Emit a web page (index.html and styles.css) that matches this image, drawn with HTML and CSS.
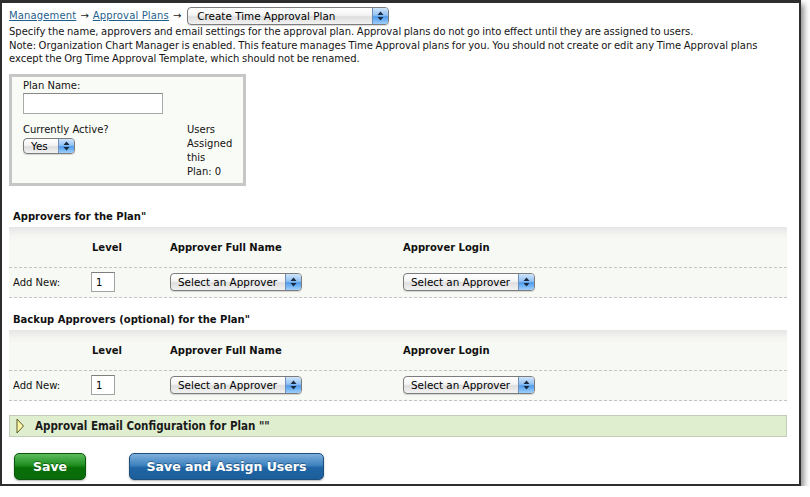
FILE: index.html
```html
<!DOCTYPE html>
<html>
<head>
<meta charset="utf-8">
<link rel="stylesheet" href="styles.css">
</head>
<body>
<div class="window">
  <div class="page">
    <div class="crumbs">
      <a href="#" class="link">Management</a>
      <span class="arr">→</span>
      <a href="#" class="link">Approval Plans</a>
      <span class="arr last">→</span>
      <div class="select sel-plan"><span class="sel-text">Create Time Approval Plan</span><span class="sel-btn"><svg width="7" height="10" viewBox="0 0 7 10"><path d="M3.5 0.5 L6.5 4 H0.5 Z M3.5 9.5 L6.5 6 H0.5 Z" fill="#1a2a40"/></svg></span></div>
    </div>
    <p class="desc">Specify the name, approvers and email settings for the approval plan. Approval plans do not go into effect until they are assigned to users.<br>Note: Organization Chart Manager is enabled. This feature manages Time Approval plans for you. You should not create or edit any Time Approval plans<br>except the Org Time Approval Template, which should not be renamed.</p>

    <div class="planbox">
      <div class="pb-name">
        <div class="lbl">Plan Name:</div>
        <input class="txt-input" type="text">
      </div>
      <div class="pb-active">
        <div class="lbl">Currently Active?</div>
        <div class="select sel-yes"><span class="sel-text">Yes</span><span class="sel-btn"><svg width="7" height="10" viewBox="0 0 7 10"><path d="M3.5 0.5 L6.5 4 H0.5 Z M3.5 9.5 L6.5 6 H0.5 Z" fill="#1a2a40"/></svg></span></div>
      </div>
      <div class="pb-users">Users<br>Assigned<br>this<br>Plan: 0</div>
    </div>

    <section class="block first">
      <h3 class="block-title">Approvers for the Plan"</h3>
      <div class="tbl">
        <div class="row head"><span></span><span>Level</span><span>Approver Full Name</span><span>Approver Login</span></div>
        <div class="row body">
          <span>Add New:</span>
          <span><input class="lvl-input" type="text" value="1"></span>
          <span><div class="select sel-appr"><span class="sel-text">Select an Approver</span><span class="sel-btn"><svg width="7" height="10" viewBox="0 0 7 10"><path d="M3.5 0.5 L6.5 4 H0.5 Z M3.5 9.5 L6.5 6 H0.5 Z" fill="#1a2a40"/></svg></span></div></span>
          <span><div class="select sel-appr"><span class="sel-text">Select an Approver</span><span class="sel-btn"><svg width="7" height="10" viewBox="0 0 7 10"><path d="M3.5 0.5 L6.5 4 H0.5 Z M3.5 9.5 L6.5 6 H0.5 Z" fill="#1a2a40"/></svg></span></div></span>
        </div>
      </div>
    </section>

    <section class="block second">
      <h3 class="block-title">Backup Approvers (optional) for the Plan"</h3>
      <div class="tbl">
        <div class="row head"><span></span><span>Level</span><span>Approver Full Name</span><span>Approver Login</span></div>
        <div class="row body">
          <span>Add New:</span>
          <span><input class="lvl-input" type="text" value="1"></span>
          <span><div class="select sel-appr"><span class="sel-text">Select an Approver</span><span class="sel-btn"><svg width="7" height="10" viewBox="0 0 7 10"><path d="M3.5 0.5 L6.5 4 H0.5 Z M3.5 9.5 L6.5 6 H0.5 Z" fill="#1a2a40"/></svg></span></div></span>
          <span><div class="select sel-appr"><span class="sel-text">Select an Approver</span><span class="sel-btn"><svg width="7" height="10" viewBox="0 0 7 10"><path d="M3.5 0.5 L6.5 4 H0.5 Z M3.5 9.5 L6.5 6 H0.5 Z" fill="#1a2a40"/></svg></span></div></span>
        </div>
      </div>
    </section>

    <div class="emailbar">
      <svg class="tri" width="9" height="16" viewBox="0 0 9 16"><path d="M1 1 L7.5 8 L1 15 Z" fill="#fbf6a8" stroke="#5a5a20" stroke-width="1"/></svg>
      <span class="email-text">Approval Email Configuration for Plan ""</span>
    </div>

    <div class="buttons">
      <button class="btn btn-green">Save</button>
      <button class="btn btn-blue">Save and Assign Users</button>
    </div>
  </div>
</div>
</body>
</html>
```

FILE: styles.css
```css
html, body {
  margin: 0;
  padding: 0;
  background: #ffffff;
}
body {
  font-family: "DejaVu Sans", Verdana, sans-serif;
  font-size: 10px;
  color: #111;
}
.window {
  width: 797px;
  height: 481px;
  border: 2px solid #2e2e2e;
  border-top: 3px solid #2e2e2e;
  background: #ffffff;
  box-shadow: 3px 4px 6px rgba(0, 0, 0, 0.45);
}
.page {
  padding: 0 11px 0 7px;
}
.crumbs {
  display: flex;
  align-items: center;
  height: 18px;
  padding-top: 4px;
  line-height: 14px;
}
.link {
  color: #1f5f8e;
  text-decoration: underline;
  letter-spacing: 0.15px;
}
.arr {
  margin: 0 4px 0 4px;
  color: #222;
}
.arr.last {
  margin-right: 6px;
}
.desc {
  margin: 0;
  line-height: 13.5px;
  color: #151515;
  word-spacing: -0.6px;
}

/* mac style select */
.select {
  display: flex;
  box-sizing: border-box;
  border: 1px solid #7c7c7c;
  border-radius: 4px;
  background: linear-gradient(#ffffff 0%, #f4f4f4 45%, #dedede 55%, #f2f2f2 100%);
  overflow: hidden;
  font-size: 10.4px;
  color: #000;
  box-shadow: 0 1px 1px rgba(0,0,0,0.15);
}
.sel-text {
  flex: 1;
  white-space: nowrap;
  overflow: hidden;
}
.sel-btn {
  width: 15px;
  display: flex;
  align-items: center;
  justify-content: center;
  border-left: 1px solid #6d8fb8;
  background: linear-gradient(#cfe4fb 0%, #93c2f3 45%, #4f9bec 55%, #9fd0fb 100%);
}
.sel-plan {
  width: 202px;
  height: 18px;
  line-height: 16px;
  margin-top: -1px;
}
.sel-plan .sel-text { padding-left: 9px; }
.sel-yes {
  width: 52px;
  height: 16px;
  line-height: 14px;
  margin-top: 1px;
}
.sel-yes .sel-text { padding-left: 7px; }
.sel-appr {
  width: 132px;
  height: 18px;
  line-height: 16px;
}
.sel-appr .sel-text { padding-left: 7px; }

/* plan box */
.planbox {
  box-sizing: border-box;
  width: 237px;
  margin-top: 8px;
  border: 3px solid #c6c6c6;
  background: #f9fbf6;
  padding: 2px 0 4px 11px;
  display: grid;
  grid-template-columns: 164px 1fr;
  grid-template-rows: auto auto;
  line-height: 14px;
}
.pb-name {
  grid-column: 1 / 3;
}
.txt-input {
  display: block;
  box-sizing: border-box;
  width: 140px;
  height: 21px;
  margin: 0;
  border: 1px solid #a9a9a9;
  border-top-color: #888;
  background: #fff;
}
.pb-active {
  padding-top: 9px;
}
.pb-users {
  padding-top: 9px;
}

/* approver blocks */
.block-title {
  margin: 0;
  font-size: 10px;
  font-weight: bold;
  line-height: 14px;
  padding-left: 4px;
}
.block.first { margin-top: 24px; }
.block.second { margin-top: 15px; }
.tbl {
  margin-top: 3px;
  width: 778px;
  background: linear-gradient(#e6e6e6 0px, #f4f5f2 8px, #f7f9f4 14px);
}
.row {
  display: grid;
  grid-template-columns: 78px 79px 233px 1fr;
  padding-left: 4px;
  border-bottom: 1px dashed #c4c4c4;
  align-items: center;
}
.row.head {
  padding-top: 14px;
  padding-bottom: 12px;
  line-height: 14px;
  font-weight: bold;
}
.row.head span:nth-child(2) { padding-left: 1px; }
.row.body {
  height: 29px;
}
.lvl-input {
  display: block;
  box-sizing: border-box;
  width: 24px;
  height: 20px;
  margin: 0;
  border: 1px solid #a3a3a3;
  border-top-color: #7f7f7f;
  padding: 0 0 0 4px;
  font-family: "DejaVu Sans", Verdana, sans-serif;
  font-size: 10px;
  color: #000;
  background: #fff;
}

/* email bar */
.emailbar {
  box-sizing: border-box;
  width: 778px;
  height: 22px;
  margin-top: 14px;
  border: 1px solid #c3ccb9;
  background: #dfeecf;
  display: flex;
  align-items: center;
  padding-left: 6px;
}
.tri { display: block; margin-top: 1px; }
.email-text {
  margin-left: 10px;
  font-family: "DejaVu Sans Condensed", "DejaVu Sans", sans-serif;
  font-weight: bold;
  font-size: 11.5px;
  color: #1a1a1a;
}

/* buttons */
.buttons {
  display: flex;
  gap: 43px;
  margin-top: 16px;
  padding-left: 5px;
}
.btn {
  height: 27px;
  border-radius: 5px;
  font-family: "DejaVu Sans", Verdana, sans-serif;
  font-weight: bold;
  font-size: 12.5px;
  color: #fff;
  padding: 0;
  cursor: pointer;
  text-shadow: 0 -1px 0 rgba(0,0,0,0.35);
  box-shadow: 0 1px 2px rgba(0,0,0,0.3);
}
.btn-green {
  width: 72px;
  border: 1px solid #0a560a;
  background: linear-gradient(#5cbc5c 0%, #1f8f1f 45%, #087008 55%, #0a6a0a 100%);
}
.btn-blue {
  width: 195px;
  border: 1px solid #1d4f7d;
  background: linear-gradient(#7fb0dc 0%, #3e82bf 45%, #1f65a5 55%, #1c5e99 100%);
}
```
